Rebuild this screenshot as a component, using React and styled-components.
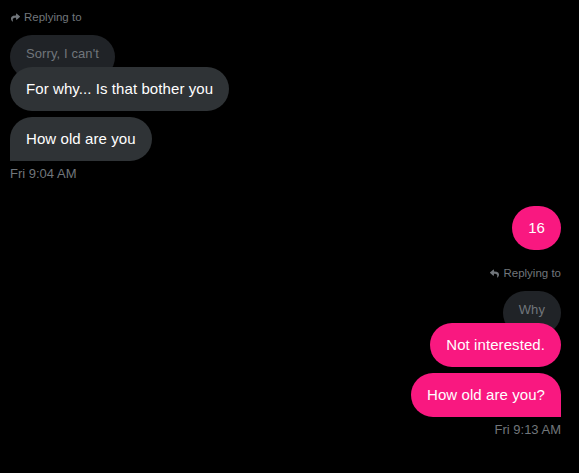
import React from "react";
import styled, { createGlobalStyle } from "styled-components";
import { FaShare, FaReply } from "react-icons/fa";

const GlobalStyle = createGlobalStyle`
  html, body {
    margin: 0;
    padding: 0;
    background: #000;
  }
  body {
    font-family: "Liberation Sans", Arial, sans-serif;
    -webkit-font-smoothing: antialiased;
  }
`;

const Container = styled.div`
  width: 579px;
  height: 473px;
  box-sizing: border-box;
  padding: 9px 18px 0 10px;
  background: #000;
  display: flex;
  flex-direction: column;
  overflow: hidden;
`;

const Group = styled.div`
  display: flex;
  flex-direction: column;
  align-items: ${props => (props.mine ? "flex-end" : "flex-start")};
  gap: 6px;
  margin-top: ${props => props.top || 0}px;
`;

const ReplyHint = styled.div`
  display: flex;
  align-items: center;
  gap: 4px;
  height: 16px;
  font-size: 11.5px;
  color: #71767b;
  margin-bottom: 4px;
  padding: ${props => (props.mine ? "0" : "0 0 0 1px")};

  svg {
    width: 9px;
    height: 9px;
  }
`;

const Quote = styled.div`
  background: #202327;
  color: #71767b;
  font-size: 13px;
  line-height: 16px;
  letter-spacing: 0.1px;
  padding: 11px 16px 17px;
  border-radius: 22px;
  margin-bottom: -18px;
`;

const Bubble = styled.div`
  position: relative;
  background: ${props => (props.mine ? "#f91880" : "#2f3336")};
  color: #fff;
  font-size: 15px;
  line-height: 20px;
  letter-spacing: 0.08px;
  padding: 12px 16px;
  border-radius: 22px;
  border-bottom-left-radius: ${props => (props.last && !props.mine ? 0 : 22)}px;
  border-bottom-right-radius: ${props => (props.last && props.mine ? 0 : 22)}px;
  white-space: nowrap;
`;

const Time = styled.div`
  font-size: 13px;
  line-height: 16px;
  color: #71767b;
  margin-top: -1px;
`;

const App = () => (
  <>
    <GlobalStyle />
    <Container>
      <Group>
        <ReplyHint>
          <FaShare />
          Replying to
        </ReplyHint>
        <Quote>Sorry, I can't</Quote>
        <Bubble>For why... Is that bother you</Bubble>
        <Bubble last>How old are you</Bubble>
        <Time>Fri 9:04 AM</Time>
      </Group>

      <Group mine top={24}>
        <Bubble mine>16</Bubble>
      </Group>

      <Group mine top={15}>
        <ReplyHint mine>
          <FaReply />
          Replying to
        </ReplyHint>
        <Quote>Why</Quote>
        <Bubble mine>Not interested.</Bubble>
        <Bubble mine last>How old are you?</Bubble>
        <Time>Fri 9:13 AM</Time>
      </Group>
    </Container>
  </>
);

export default App;
